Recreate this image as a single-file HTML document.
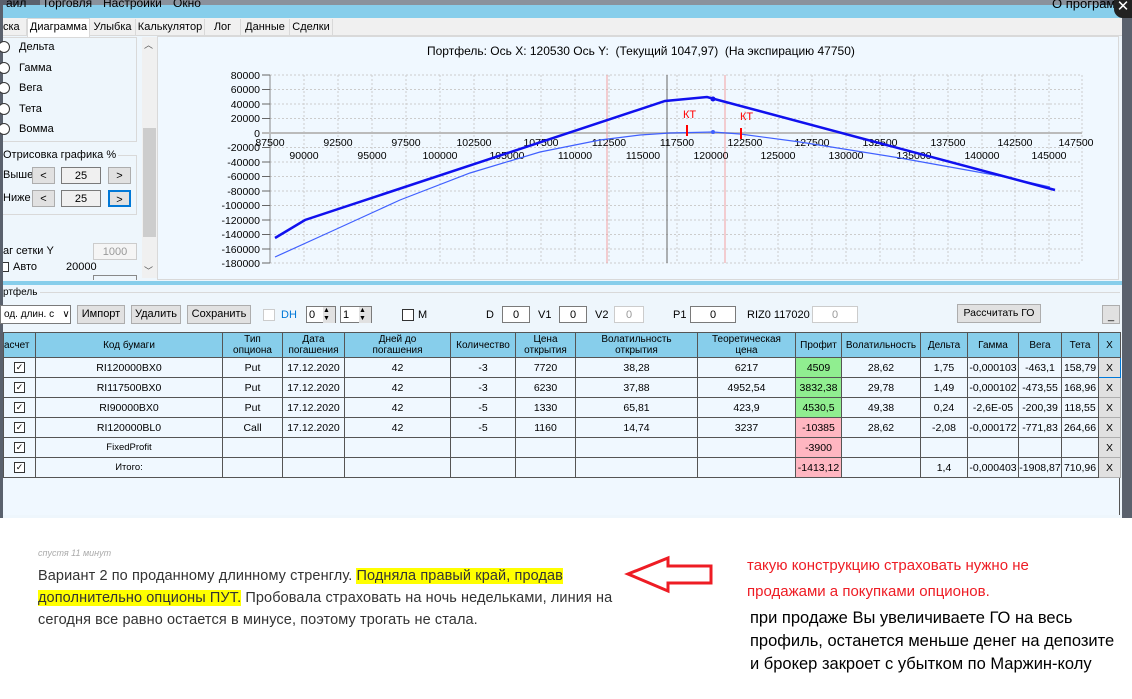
<!DOCTYPE html>
<html><head><meta charset="utf-8">
<style>
*{margin:0;padding:0;box-sizing:border-box}
body{width:1132px;height:699px;position:relative;overflow:hidden;background:#fff;font-family:"Liberation Sans","DejaVu Sans",sans-serif;font-size:11px;color:#000}
.a{position:absolute}
.btn{position:absolute;background:#e1e1e1;border:1px solid #adadad;font-size:11px;text-align:center;line-height:16px;white-space:nowrap}
.inp{position:absolute;background:#fff;border:1px solid #7a7a7a;font-size:11px;text-align:center;line-height:16px}
table{border-collapse:collapse;table-layout:fixed}
td,th{border:1px solid #555;font-size:10.5px;text-align:center;font-weight:normal;height:20px;padding:0;white-space:nowrap;overflow:hidden}
th{background:#87ceeb;height:25px;line-height:11px;font-size:10px}
td{background:#f0f8ff}
.g{background:#90ee90}.r{background:#ffb6c1}
.x{background:#e1e1e1;border:1px solid #adadad}
.cb{display:inline-block;width:11px;height:11px;border:1px solid #333;background:#fff;font-size:9px;line-height:9px;vertical-align:middle}
.rad{position:absolute;width:12px;height:12px;border:1px solid #333;border-radius:50%;background:#fff}
.hl{background:#ffff00}
.tab{position:absolute;top:19px;height:17px;line-height:17px;font-size:11px;border-right:1px solid #d9d9d9;text-align:center}
</style></head><body>
<div class="a" style="left:0;top:0;width:1132px;height:518px;background:#5a616d"></div>
<div class="a" style="left:40px;top:0;width:1060px;height:5px;background:#8a929c"></div>
<div class="a" style="left:3px;top:5px;width:1119px;height:13px;background:#87ceeb"></div>
<div class="a" style="left:6px;top:-3px;font-size:12px;line-height:13px">айл</div>
<div class="a" style="left:42px;top:-3px;font-size:12px;line-height:13px">Торговля</div>
<div class="a" style="left:103px;top:-3px;font-size:12px;line-height:13px">Настройки</div>
<div class="a" style="left:173px;top:-3px;font-size:12px;line-height:13px">Окно</div>
<div class="a" style="left:1052px;top:-3px;font-size:13px;line-height:13px">О программе</div>
<div class="a" style="left:1114px;top:0;width:18px;height:18px;background:#222;border-radius:0 0 0 9px;color:#fff;font-size:15px;line-height:14px;text-align:center">✕</div>
<div class="a" style="left:3px;top:18px;width:1119px;height:500px;background:#eef6fc"></div>
<div class="a" style="left:3px;top:18px;width:1119px;height:18px;background:#f0f0f0;border-bottom:1px solid #d9d9d9"></div>
<div class="tab" style="left:3px;width:24px;text-align:left">ска</div>
<div class="tab" style="left:27px;width:63px;background:#fff;border:1px solid #d9d9d9;border-bottom:none;top:18px;height:19px">Диаграмма</div>
<div class="tab" style="left:90px;width:46px">Улыбка</div>
<div class="tab" style="left:136px;width:69px">Калькулятор</div>
<div class="tab" style="left:205px;width:36px">Лог</div>
<div class="tab" style="left:241px;width:49px">Данные</div>
<div class="tab" style="left:290px;width:43px">Сделки</div>
<div class="a" style="left:3px;top:37px;width:134px;height:105px;border:1px solid #d9d9d9;border-left:none"></div>
<div class="rad" style="left:-2px;top:41px"></div><div class="a" style="left:19px;top:41px">Дельта</div>
<div class="rad" style="left:-2px;top:62px"></div><div class="a" style="left:19px;top:62px">Гамма</div>
<div class="rad" style="left:-2px;top:82px"></div><div class="a" style="left:19px;top:82px">Вега</div>
<div class="rad" style="left:-2px;top:103px"></div><div class="a" style="left:19px;top:103px">Тета</div>
<div class="rad" style="left:-2px;top:123px"></div><div class="a" style="left:19px;top:123px">Вомма</div>
<div class="a" style="left:3px;top:155px;width:134px;height:60px;border:1px solid #d9d9d9;border-left:none"></div>
<div class="a" style="left:3px;top:149px;background:#eef6fc;padding-right:2px">Отрисовка графика %</div>
<div class="a" style="left:3px;top:169px">Выше</div>
<div class="btn" style="left:32px;top:167px;width:23px;height:17px">&lt;</div>
<div class="inp" style="left:61px;top:167px;width:40px;height:17px;background:#f0f0f0">25</div>
<div class="btn" style="left:108px;top:167px;width:23px;height:17px">&gt;</div>
<div class="a" style="left:3px;top:192px">Ниже</div>
<div class="btn" style="left:32px;top:190px;width:23px;height:17px">&lt;</div>
<div class="inp" style="left:61px;top:190px;width:40px;height:17px;background:#f0f0f0">25</div>
<div class="btn" style="left:108px;top:190px;width:23px;height:17px;border:2px solid #0078d7">&gt;</div>
<div class="a" style="left:3px;top:245px">аг сетки Y</div>
<div class="inp" style="left:93px;top:243px;width:44px;height:17px;color:#999;border-color:#ccc;background:#f5f5f5">1000</div>
<div class="a" style="left:3px;top:262px;width:6px;height:10px;border:1px solid #333;border-left:none;background:#fff"></div>
<div class="a" style="left:13px;top:261px">Авто</div>
<div class="a" style="left:66px;top:261px">20000</div>
<div class="a" style="left:93px;top:275px;width:44px;height:5px;border:1px solid #888;border-bottom:none"></div>
<div class="a" style="left:142px;top:37px;width:15px;height:241px;background:#f0f0f0"></div>
<div class="a" style="left:143px;top:128px;width:13px;height:109px;background:#cdcdcd"></div>
<div class="a" style="left:144px;top:38px;font-size:9px;color:#555">︿</div>
<div class="a" style="left:144px;top:264px;font-size:9px;color:#555">﹀</div>
<div class="a" style="left:157px;top:36px;width:962px;height:244px;border:1px solid #d9d9d9;background:#f0f8ff"></div>
<div class="a" style="left:427px;top:44px;font-size:12px">Портфель: Ось X: 120530 Ось Y:&nbsp; (Текущий 1047,97)&nbsp; (На экспирацию 47750)</div>
<svg class="a" style="left:0;top:0" width="1132" height="290" font-family="Liberation Sans, sans-serif" font-size="10.5">
<g stroke="#ccc" stroke-dasharray="2,2" stroke-width="1">
<line x1="270" y1="75" x2="1082" y2="75"/><line x1="270" y1="89.5" x2="1082" y2="89.5"/><line x1="270" y1="104" x2="1082" y2="104"/><line x1="270" y1="118.5" x2="1082" y2="118.5"/>
<line x1="270" y1="147.5" x2="1082" y2="147.5"/><line x1="270" y1="162" x2="1082" y2="162"/><line x1="270" y1="176.5" x2="1082" y2="176.5"/><line x1="270" y1="191" x2="1082" y2="191"/><line x1="270" y1="205.5" x2="1082" y2="205.5"/><line x1="270" y1="220" x2="1082" y2="220"/><line x1="270" y1="234.5" x2="1082" y2="234.5"/><line x1="270" y1="249" x2="1082" y2="249"/><line x1="270" y1="263" x2="1082" y2="263"/>
<line x1="304" y1="75" x2="304" y2="263"/><line x1="338" y1="75" x2="338" y2="263"/><line x1="372" y1="75" x2="372" y2="263"/><line x1="406" y1="75" x2="406" y2="263"/><line x1="440" y1="75" x2="440" y2="263"/><line x1="474" y1="75" x2="474" y2="263"/><line x1="507" y1="75" x2="507" y2="263"/><line x1="541" y1="75" x2="541" y2="263"/><line x1="575" y1="75" x2="575" y2="263"/><line x1="609" y1="75" x2="609" y2="263"/><line x1="643" y1="75" x2="643" y2="263"/><line x1="677" y1="75" x2="677" y2="263"/><line x1="711" y1="75" x2="711" y2="263"/><line x1="745" y1="75" x2="745" y2="263"/><line x1="778" y1="75" x2="778" y2="263"/><line x1="812" y1="75" x2="812" y2="263"/><line x1="846" y1="75" x2="846" y2="263"/><line x1="880" y1="75" x2="880" y2="263"/><line x1="914" y1="75" x2="914" y2="263"/><line x1="948" y1="75" x2="948" y2="263"/><line x1="982" y1="75" x2="982" y2="263"/><line x1="1015" y1="75" x2="1015" y2="263"/><line x1="1049" y1="75" x2="1049" y2="263"/><line x1="1082" y1="75" x2="1082" y2="263"/>
</g>
<line x1="270" y1="75" x2="270" y2="263" stroke="#888"/>
<line x1="262" y1="133" x2="1082" y2="133" stroke="#bbb" stroke-width="2"/>
<g stroke="#666"><line x1="262" y1="75" x2="270" y2="75"/><line x1="262" y1="89.5" x2="270" y2="89.5"/><line x1="262" y1="104" x2="270" y2="104"/><line x1="262" y1="118.5" x2="270" y2="118.5"/><line x1="262" y1="147.5" x2="270" y2="147.5"/><line x1="262" y1="162" x2="270" y2="162"/><line x1="262" y1="176.5" x2="270" y2="176.5"/><line x1="262" y1="191" x2="270" y2="191"/><line x1="262" y1="205.5" x2="270" y2="205.5"/><line x1="262" y1="220" x2="270" y2="220"/><line x1="262" y1="234.5" x2="270" y2="234.5"/><line x1="262" y1="249" x2="270" y2="249"/><line x1="262" y1="263" x2="270" y2="263"/></g>
<g text-anchor="end"><text x="260" y="79">80000</text><text x="260" y="93">60000</text><text x="260" y="108">40000</text><text x="260" y="122">20000</text><text x="260" y="137">0</text><text x="260" y="151">-20000</text><text x="260" y="166">-40000</text><text x="260" y="180">-60000</text><text x="260" y="195">-80000</text><text x="260" y="209">-100000</text><text x="260" y="224">-120000</text><text x="260" y="238">-140000</text><text x="260" y="253">-160000</text><text x="260" y="267">-180000</text></g>
<line x1="607" y1="75" x2="607" y2="263" stroke="#f4a0a0"/>
<line x1="725" y1="75" x2="725" y2="263" stroke="#f4a0a0"/>
<line x1="667" y1="75" x2="667" y2="263" stroke="#666"/>
<g text-anchor="middle"><text x="270" y="146">87500</text><text x="338" y="146">92500</text><text x="406" y="146">97500</text><text x="474" y="146">102500</text><text x="541" y="146">107500</text><text x="609" y="146">112500</text><text x="677" y="146">117500</text><text x="745" y="146">122500</text><text x="812" y="146">127500</text><text x="880" y="146">132500</text><text x="948" y="146">137500</text><text x="1015" y="146">142500</text><text x="1076" y="146">147500</text>
<text x="304" y="159">90000</text><text x="372" y="159">95000</text><text x="440" y="159">100000</text><text x="507" y="159">105000</text><text x="575" y="159">110000</text><text x="643" y="159">115000</text><text x="711" y="159">120000</text><text x="778" y="159">125000</text><text x="846" y="159">130000</text><text x="914" y="159">135000</text><text x="982" y="159">140000</text><text x="1049" y="159">145000</text></g>
<polyline points="275,257 330,232 400,200 470,173 540,152 600,140 640,135 670,133 713,132 740,134 800,142 900,158 1000,176 1050,187" fill="none" stroke="#4060ff" stroke-width="1.2"/>
<polyline points="275,238 305,220 665,101 707,97 1055,190" fill="none" stroke="#1010ee" stroke-width="2.5"/>
<circle cx="713" cy="99" r="2.5" fill="#1010ee"/><circle cx="713" cy="132" r="2" fill="#4060ff"/>
<text x="683" y="118" fill="red" font-size="11">КТ</text><text x="740" y="120" fill="red" font-size="11">КТ</text>
<line x1="687" y1="125" x2="687" y2="136" stroke="red" stroke-width="2"/><line x1="741" y1="128" x2="741" y2="139" stroke="red" stroke-width="2"/>
</svg>
<div class="a" style="left:3px;top:281px;width:1119px;height:4px;background:#87ceeb"></div>
<div class="a" style="left:3px;top:287px;font-size:10px">ртфель</div>
<div class="a" style="left:40px;top:292px;width:1080px;height:1px;background:#d9d9d9"></div>
<div class="inp" style="left:0;top:305px;width:71px;height:19px;text-align:left;padding-left:3px;line-height:17px;font-size:10px">од. длин. с&nbsp;&nbsp;&nbsp;∨</div>
<div class="btn" style="left:77px;top:305px;width:48px;height:19px">Импорт</div>
<div class="btn" style="left:131px;top:305px;width:50px;height:19px">Удалить</div>
<div class="btn" style="left:187px;top:305px;width:64px;height:19px">Сохранить</div>
<div class="a" style="left:263px;top:309px;width:12px;height:12px;border:1px solid #ccc;background:#fff"></div>
<div class="a" style="left:281px;top:309px;color:#0078d7">DH</div>
<div class="inp" style="left:306px;top:306px;width:30px;height:17px;text-align:left;padding-left:2px">0 <span style="float:right;width:12px;background:#e1e1e1;font-size:7px;line-height:8px">▲<br>▼</span></div>
<div class="inp" style="left:340px;top:306px;width:32px;height:17px;text-align:left;padding-left:2px">1 <span style="float:right;width:12px;background:#e1e1e1;font-size:7px;line-height:8px">▲<br>▼</span></div>
<div class="a" style="left:402px;top:309px;width:12px;height:12px;border:1px solid #333;background:#fff"></div>
<div class="a" style="left:418px;top:309px">M</div>
<div class="a" style="left:486px;top:309px">D</div>
<div class="inp" style="left:502px;top:306px;width:28px;height:17px">0</div>
<div class="a" style="left:538px;top:309px">V1</div>
<div class="inp" style="left:559px;top:306px;width:28px;height:17px">0</div>
<div class="a" style="left:595px;top:309px">V2</div>
<div class="inp" style="left:614px;top:306px;width:30px;height:17px;border-color:#ccc;color:#999">0</div>
<div class="a" style="left:673px;top:309px">P1</div>
<div class="inp" style="left:690px;top:306px;width:46px;height:17px">0</div>
<div class="a" style="left:747px;top:309px">RIZ0 117020&nbsp; P2</div>
<div class="inp" style="left:812px;top:306px;width:46px;height:17px;border-color:#ccc;color:#999">0</div>
<div class="btn" style="left:957px;top:304px;width:84px;height:19px;font-size:10.5px">Рассчитать ГО</div>
<div class="btn" style="left:1102px;top:305px;width:18px;height:19px;line-height:20px">_</div>
<table class="a" style="left:3px;top:332px;width:1117px">
<colgroup><col style="width:32px"><col style="width:187px"><col style="width:60px"><col style="width:62px"><col style="width:106px"><col style="width:65px"><col style="width:60px"><col style="width:122px"><col style="width:98px"><col style="width:46px"><col style="width:79px"><col style="width:47px"><col style="width:51px"><col style="width:43px"><col style="width:37px"><col style="width:22px"></colgroup>
<tr><th style="text-align:left">асчет</th><th>Код бумаги</th><th>Тип<br>опциона</th><th>Дата<br>погашения</th><th>Дней до<br>погашения</th><th>Количество</th><th>Цена<br>открытия</th><th>Волатильность<br>открытия</th><th>Теоретическая<br>цена</th><th>Профит</th><th>Волатильность</th><th>Дельта</th><th>Гамма</th><th>Вега</th><th>Тета</th><th>X</th></tr>
<tr><td><span class="cb">✓</span></td><td>RI120000BX0</td><td>Put</td><td>17.12.2020</td><td>42</td><td>-3</td><td>7720</td><td>38,28</td><td>6217</td><td class="g">4509</td><td>28,62</td><td>1,75</td><td>-0,000103</td><td>-463,1</td><td>158,79</td><td class="x" style="border:1px solid #0078d7">X</td></tr>
<tr><td><span class="cb">✓</span></td><td>RI117500BX0</td><td>Put</td><td>17.12.2020</td><td>42</td><td>-3</td><td>6230</td><td>37,88</td><td>4952,54</td><td class="g">3832,38</td><td>29,78</td><td>1,49</td><td>-0,000102</td><td>-473,55</td><td>168,96</td><td class="x">X</td></tr>
<tr><td><span class="cb">✓</span></td><td>RI90000BX0</td><td>Put</td><td>17.12.2020</td><td>42</td><td>-5</td><td>1330</td><td>65,81</td><td>423,9</td><td class="g">4530,5</td><td>49,38</td><td>0,24</td><td>-2,6E-05</td><td>-200,39</td><td>118,55</td><td class="x">X</td></tr>
<tr><td><span class="cb">✓</span></td><td>RI120000BL0</td><td>Call</td><td>17.12.2020</td><td>42</td><td>-5</td><td>1160</td><td>14,74</td><td>3237</td><td class="r">-10385</td><td>28,62</td><td>-2,08</td><td>-0,000172</td><td>-771,83</td><td>264,66</td><td class="x">X</td></tr>
<tr><td><span class="cb">✓</span></td><td style="font-size:9.5px">FixedProfit</td><td></td><td></td><td></td><td></td><td></td><td></td><td></td><td class="r">-3900</td><td></td><td></td><td></td><td></td><td></td><td class="x">X</td></tr>
<tr><td><span class="cb">✓</span></td><td style="font-size:9.5px">Итого:</td><td></td><td></td><td></td><td></td><td></td><td></td><td></td><td class="r">-1413,12</td><td></td><td>1,4</td><td>-0,000403</td><td>-1908,87</td><td>710,96</td><td class="x">X</td></tr>
</table>
<div class="a" style="left:3px;top:478px;width:1117px;height:37px;background:#f0f8ff;border-right:1px solid #555"></div>
<div class="a" style="left:0;top:518px;width:1132px;height:181px;background:#fff"></div>
<div class="a" style="left:38px;top:548px;font-size:9px;color:#aaa;font-style:italic">спустя 11 минут</div>
<div class="a" style="left:38px;top:565px;width:620px;font-size:14.5px;line-height:22px;color:#333;letter-spacing:0.1px;white-space:nowrap">Вариант 2 по проданному длинному стренглу. <span class="hl">Подняла правый край, продав</span><br><span class="hl">дополнительно опционы ПУТ.</span> Пробовала страховать на ночь недельками, линия на<br>сегодня все равно остается в минусе, поэтому трогать не стала.</div>
<svg class="a" style="left:620px;top:550px" width="100" height="50"><polygon points="8,24 48,8 48,16 91,16 91,33 48,33 48,41" fill="none" stroke="#ee1c24" stroke-width="3"/></svg>
<div class="a" style="left:747px;top:553px;font-size:15px;line-height:26px;color:#ee1c24;white-space:nowrap">такую конструкцию страховать нужно не<br>продажами а покупками опционов.</div>
<div class="a" style="left:750px;top:607px;font-size:16.5px;line-height:23px;color:#000;white-space:nowrap">при продаже Вы увеличиваете ГО на весь<br>профиль, останется меньше денег на депозите<br>и брокер закроет с убытком по Маржин-колу</div>
</body></html>
